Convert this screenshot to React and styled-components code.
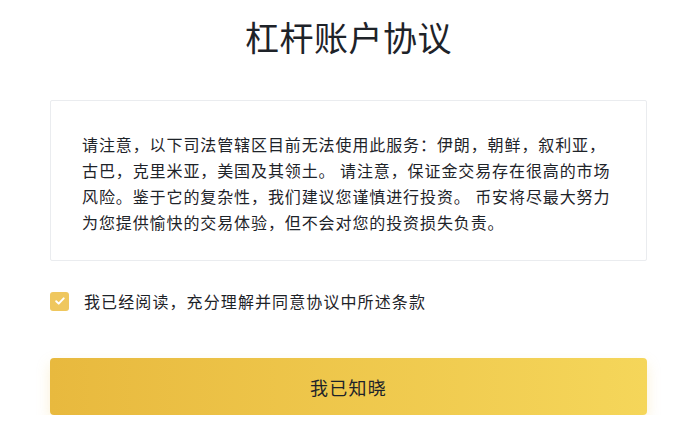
import styled, { createGlobalStyle } from "styled-components";

const GlobalStyle = createGlobalStyle`
  html, body {
    margin: 0;
    padding: 0;
    background: #ffffff;
  }
  body {
    font-family: "Noto Sans CJK SC", "Noto Sans", sans-serif;
    color: #1e2329;
  }
`;

const lines = [
  "请注意，以下司法管辖区目前无法使用此服务：伊朗，朝鲜，叙利亚，",
  "古巴，克里米亚，美国及其领土。 请注意，保证金交易存在很高的市场",
  "风险。鉴于它的复杂性，我们建议您谨慎进行投资。 币安将尽最大努力",
  "为您提供愉快的交易体验，但不会对您的投资损失负责。",
];

export default function App() {
  return (
    <>
      <GlobalStyle />
      <Page>
        <Title>杠杆账户协议</Title>
        <Notice>
          {lines.map((l) => (
            <NoticeLine key={l}>{l}</NoticeLine>
          ))}
        </Notice>
        <Agree>
          <CheckBox>
            <svg width="12" height="12" viewBox="0 0 12 12" fill="none">
              <path d="M2.2 6.2l2.5 2.4 5-5.2" stroke="#fff" strokeWidth="2" strokeLinecap="round" strokeLinejoin="round" />
            </svg>
          </CheckBox>
          <span>我已经阅读，充分理解并同意协议中所述条款</span>
        </Agree>
        <ConfirmButton>我已知晓</ConfirmButton>
      </Page>
    </>
  );
}

// ----------------------- Styled Components -----------------------
const Page = styled.div`
  width: 597px;
  margin: 0 0 0 50px;
  padding-top: 10px;
  display: flex;
  flex-direction: column;
`;

const Title = styled.h1`
  margin: 0;
  text-align: center;
  font-size: 34px;
  font-weight: 400;
  line-height: 54px;
  color: #1e2329;
  letter-spacing: 0.5px;
`;

const Notice = styled.div`
  margin-top: 36px;
  border: 1px solid #eaecef;
  border-radius: 2px;
  padding: 30px 4px 25px 31px;
  font-size: 16px;
  letter-spacing: 0.9px;
  line-height: 26px;
  color: #1e2329;
  text-spacing-trim: space-all;
`;

const NoticeLine = styled.div`
  white-space: nowrap;
`;

const Agree = styled.label`
  margin-top: 29px;
  display: flex;
  align-items: center;
  gap: 15px;
  font-size: 16px;
  letter-spacing: 1.1px;
  line-height: 22px;
  color: #1e2329;
  text-spacing-trim: space-all;
`;

const CheckBox = styled.span`
  width: 19px;
  height: 19px;
  border-radius: 3px;
  background: #efc75e;
  display: flex;
  align-items: center;
  justify-content: center;
`;

const ConfirmButton = styled.button`
  margin-top: 46px;
  height: 57px;
  border: none;
  border-radius: 4px;
  background: linear-gradient(90deg, #e8b93e 0%, #f5d65a 100%);
  box-shadow: 0 6px 14px rgba(240, 200, 90, 0.25);
  font-family: "Noto Sans CJK SC", "Noto Sans", sans-serif;
  font-size: 18px;
  letter-spacing: 1.2px;
  color: #1e2329;
  cursor: pointer;
`;
